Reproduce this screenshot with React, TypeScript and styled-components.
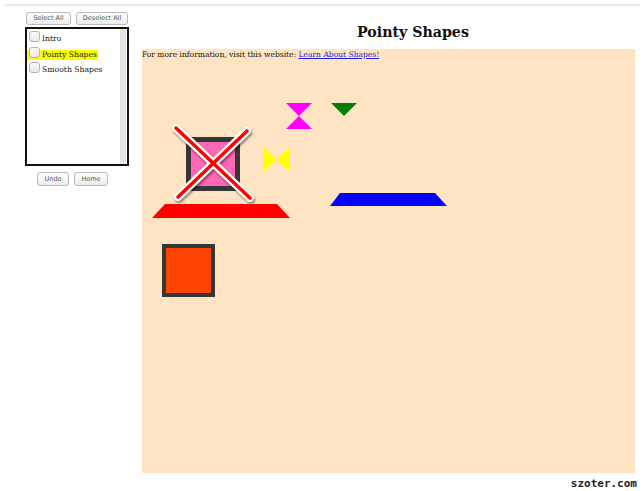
import React from "react";
import styled, { createGlobalStyle } from "styled-components";

const GlobalStyle = createGlobalStyle`
body {
	margin: 0;
	background: #fff;
	font-family: "DejaVu Serif", serif;
}
`;

type Item = {
	label: string;
	active?: boolean;
};

const items: Item[] = [
	{ label: "Intro" },
	{ label: "Pointy Shapes", active: true },
	{ label: "Smooth Shapes" },
];

const App: React.FC = () => {
	return (
		<>
			<GlobalStyle />
			<Div_Page>
				<Div_Rule />
				<Div_Layout>
					<Div_Side>
						<Div_ButtonRow $left={26}>
							<Button_Small $w={45}>Select All</Button_Small>
							<Button_Small $w={52}>Deselect All</Button_Small>
						</Div_ButtonRow>
						<Div_ListBox>
							<Div_List>
								{items.map((item) => (
									<Div_Row key={item.label}>
										<Label_Item $active={item.active}>
											<Input_Check type="checkbox" />
											<span>{item.label}</span>
										</Label_Item>
									</Div_Row>
								))}
							</Div_List>
							<Div_Scroll />
						</Div_ListBox>
						<Div_ButtonRow $left={37} $top={6}>
							<Button_Small $w={32} $h={14}>Undo</Button_Small>
							<Button_Small $w={34} $h={14}>Home</Button_Small>
						</Div_ButtonRow>
					</Div_Side>
					<Div_Main>
						<H1_Title>Pointy Shapes</H1_Title>
						<Div_Canvas>
							<P_Info>
								For more information, visit this website: <A_Link href="#">Learn About Shapes!</A_Link>
							</P_Info>
							<Div_Square $x={44} $y={88} $size={54} $border={5} $fill="#ff69b4" />
							<Svg_Cross $x={28} $y={73} width={85} height={80} viewBox="0 0 85 80">
								<line x1={6} y1={6} x2={80} y2={76} stroke="#fff" strokeWidth={8} strokeLinecap="round" />
								<line x1={77} y1={9} x2={8} y2={75} stroke="#fff" strokeWidth={8} strokeLinecap="round" />
								<line x1={6} y1={6} x2={80} y2={76} stroke="#ff0000" strokeWidth={3.5} strokeLinecap="round" />
								<line x1={77} y1={9} x2={8} y2={75} stroke="#ff0000" strokeWidth={3.5} strokeLinecap="round" />
							</Svg_Cross>
							<Svg_Shape $x={10} $y={155} width={138} height={14}>
								<polygon points="13,0 125,0 138,14 0,14" fill="#ff0000" />
							</Svg_Shape>
							<Svg_Shape $x={188} $y={144} width={117} height={13}>
								<polygon points="10,0 105,0 117,13 0,13" fill="#0000ff" />
							</Svg_Shape>
							<Svg_Shape $x={144} $y={54} width={26} height={26}>
								<polygon points="0,0 26,0 13,13" fill="#ff00ff" />
								<polygon points="13,13 26,26 0,26" fill="#ff00ff" />
							</Svg_Shape>
							<Svg_Shape $x={189} $y={54} width={26} height={13}>
								<polygon points="0,0 26,0 13,13" fill="#008000" />
							</Svg_Shape>
							<Svg_Shape $x={121} $y={98} width={27} height={25}>
								<polygon points="0,0 13.5,12.5 0,25" fill="#ffff00" />
								<polygon points="27,0 13.5,12.5 27,25" fill="#ffff00" />
							</Svg_Shape>
							<Div_Square $x={20} $y={195} $size={53} $border={4} $fill="#ff4500" />
						</Div_Canvas>
						<Div_Footer>szoter.com</Div_Footer>
					</Div_Main>
				</Div_Layout>
			</Div_Page>
		</>
	);
};
export default App;

const Div_Page = styled.div`
width: 640px;
height: 491px;
overflow: hidden;
padding-top: 4px;
box-sizing: border-box;
`
const Div_Rule = styled.div`
margin-left: 5px;
height: 2px;
background: #e6e6e6;
`
const Div_Layout = styled.div`
display: flex;
`
const Div_Side = styled.div`
width: 142px;
flex-shrink: 0;
padding-top: 6px;
`
const Div_ButtonRow = styled.div<{ $left: number; $top?: number }>`
display: flex;
gap: 5px;
padding-left: ${(p) => p.$left}px;
margin-top: ${(p) => p.$top || 0}px;
`
const Button_Small = styled.button<{ $w: number; $h?: number }>`
width: ${(p) => p.$w}px;
height: ${(p) => p.$h || 13}px;
padding: 0;
border: 1px solid #b8b8b8;
border-radius: 3px;
background: linear-gradient(#ffffff, #ececec);
font-family: "DejaVu Sans", sans-serif;
font-size: 6.5px;
color: #555;
line-height: 1;
`
const Div_ListBox = styled.div`
margin: 2px 0 0 25px;
width: 104px;
height: 139px;
box-sizing: border-box;
border: 2px solid #111;
display: flex;
`
const Div_List = styled.div`
flex: 1;
padding: 1px 0 0 0;
`
const Div_Scroll = styled.div`
width: 6px;
margin-right: 1px;
background: #e3e3e3;
`
const Div_Row = styled.div`
height: 15.5px;
display: flex;
align-items: flex-start;
`
const Label_Item = styled.label<{ $active?: boolean }>`
display: inline-flex;
align-items: flex-end;
margin-top: 4px;
height: 10px;
padding: 0 1px 0 2px;
background: ${(p) => (p.$active ? "#ffff00" : "transparent")};
font-size: 7.7px;
line-height: 10px;
color: #111;
white-space: nowrap;
`
const Input_Check = styled.input`
appearance: none;
margin: -3px 2px 0 0;
align-self: flex-start;
width: 11px;
height: 11px;
border: 1px solid #b3b3b3;
border-radius: 3px;
background: linear-gradient(#fafafa, #e8e8e8);
box-sizing: border-box;
`
const Div_Main = styled.div`
flex: 1;
`
const H1_Title = styled.h1`
margin: 0;
height: 43px;
padding-left: 215px;
display: flex;
align-items: center;
padding-top: 8px;
box-sizing: border-box;
font-size: 14.2px;
font-weight: bold;
color: #111;
`
const Div_Canvas = styled.div`
position: relative;
width: 493px;
height: 424px;
background: #ffe4c4;
`
const P_Info = styled.p`
margin: 0;
padding-top: 1px;
font-size: 7.55px;
line-height: 9px;
color: #111;
`
const A_Link = styled.a`
color: #2020ee;
`
const Div_Square = styled.div<{ $x: number; $y: number; $size: number; $border: number; $fill: string }>`
position: absolute;
left: ${(p) => p.$x}px;
top: ${(p) => p.$y}px;
width: ${(p) => p.$size}px;
height: ${(p) => p.$size}px;
box-sizing: border-box;
border: ${(p) => p.$border}px solid #363636;
background: ${(p) => p.$fill};
`
const Svg_Shape = styled.svg<{ $x: number; $y: number }>`
position: absolute;
left: ${(p) => p.$x}px;
top: ${(p) => p.$y}px;
`
const Svg_Cross = styled(Svg_Shape)`
filter: drop-shadow(1px 2px 1px rgba(0, 0, 0, 0.45));
`
const Div_Footer = styled.div`
text-align: right;
padding: 5px 3px 0 0;
font-family: "DejaVu Sans Mono", monospace;
font-weight: bold;
font-size: 11px;
line-height: 12px;
color: #222;
`
